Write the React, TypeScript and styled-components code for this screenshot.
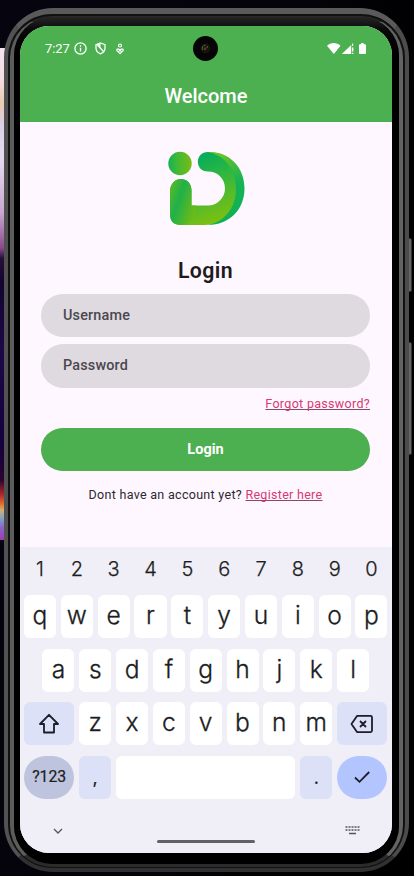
import React from "react";
import styled, { createGlobalStyle } from "styled-components";

const GlobalStyle = createGlobalStyle`
  * { box-sizing: border-box; }
  body { margin: 0; background: #03020a; font-family: Roboto, "Liberation Sans", sans-serif; }
`;

const Stage = styled.div`
  position: relative;
  width: 414px;
  height: 876px;
  overflow: hidden;
  padding: 8px 0 0 4px;
  background: linear-gradient(100deg, #06040f 0%, #04030a 50%, #000 80%);
`;

const Wallpaper = styled.div`
  position: absolute;
  left: 0;
  top: 48px;
  width: 10px;
  height: 492px;
  background: linear-gradient(
    #f3e4ef 0, #f5dfe4 30px, #eccbb0 55px, #dcd0e6 75px, #e6dcf2 110px, #c9a6cf 165px,
    #8a4a8e 200px, #26103a 210px, #12042e 235px, #1c0748 300px, #14003c 400px, #2a0330 432px,
    #b02a2c 447px, #e07030 456px, #d8b070 462px, #82a4c8 470px, #8a62c8 480px, #a03ab0 492px
  );
`;

const SideButton = styled.div<{ $top: number; $height: number }>`
  position: absolute;
  left: 408px;
  top: ${(p) => p.$top}px;
  width: 4px;
  height: ${(p) => p.$height}px;
  border-radius: 0 2px 2px 0;
  border: 1px solid #333;
  background: #666;
`;

const Shell = styled.div`
  position: relative;
  width: 405px;
  height: 864px;
  border-radius: 49px;
  border: solid;
  border-width: 6px 4px 4px 4px;
  border-color: #5a5a5a #4c4c4c #303030 #525252;
  background: #3c3c3c;
`;

const Groove = styled.div`
  height: 100%;
  border-radius: 44px;
  border: solid #111;
  border-width: 2px 2px 1px 2px;
  background: #111;
`;

const Rim = styled.div`
  height: 100%;
  border-radius: 42px;
  border: solid;
  border-width: 1px 4px 3px 4px;
  border-color: #292929 #636363 #2b2b2b #5c5c5c;
  background: #1c1c1c;
`;

const Bezel = styled.div`
  height: 100%;
  padding: 9px 7px 11px 6px;
  border-radius: 38px;
  background: linear-gradient(#252525, #0a0a0a 12px, #000 30px, #000);
`;

const Screen = styled.div`
  display: flex;
  flex-direction: column;
  width: 372px;
  height: 827px;
  overflow: hidden;
  border-radius: 29px;
  background: #fef7ff;
`;

const Header = styled.header`
  height: 96px;
  background: #4caf50;
  color: #fff;
`;

const StatusBar = styled.div`
  display: grid;
  grid-template-columns: 1fr 26px 1fr;
  align-items: center;
  height: 45px;
  padding: 0 25px;
`;

const StatusGroup = styled.div<{ $end?: boolean }>`
  display: flex;
  align-items: center;
  justify-content: ${(p) => (p.$end ? "flex-end" : "flex-start")};
  svg { display: block; }
`;

const Spacer = styled.span<{ $w: number }>`
  width: ${(p) => p.$w}px;
`;

const Clock = styled.span`
  width: 29px;
  font-size: 13px;
  letter-spacing: -0.1px;
  line-height: 16px;
`;

const Camera = styled.div`
  display: grid;
  place-items: center;
  width: 25px;
  height: 25px;
  border-radius: 50%;
  background: #050505;
`;

const AppTitle = styled.h1`
  margin: 13px 0 0;
  text-align: center;
  font-size: 20px;
  line-height: 24px;
  font-weight: 500;
`;

const Form = styled.main`
  display: flex;
  flex-direction: column;
  height: 425px;
  padding: 29px 22px 0 21px;
`;

const LogoRow = styled.div`
  display: flex;
  height: 76px;
  padding-left: 127px;
`;

const Heading = styled.h2`
  margin: 32px 0 10.5px;
  text-align: center;
  font-size: 21.3px;
  line-height: 24px;
  font-weight: 600;
  letter-spacing: 0.4px;
  color: #1d1b20;
`;

const Field = styled.div`
  height: 43.3px;
  margin-bottom: 7.5px;
  padding-left: 22px;
  border-radius: 22px;
  background: #dedae0;
  color: #4b474f;
  font-size: 14.4px;
  font-weight: 500;
  line-height: 44px;
  letter-spacing: 0.18px;
`;

const Link = styled.a`
  color: #d63a72;
  text-decoration: underline;
  text-decoration-color: #8b4967;
  text-decoration-thickness: 1px;
  text-underline-offset: 1px;
  text-decoration-skip-ink: none;
`;

const ForgotRow = styled.div`
  margin-top: 1px;
  text-align: right;
  font-size: 12.5px;
  line-height: 16px;
  letter-spacing: 0.31px;
`;

const Submit = styled.button`
  flex: none;
  width: 329px;
  height: 43px;
  margin: 15.8px 0 0;
  padding: 1px 0 0;
  border: 0;
  border-radius: 22px;
  background: #4caf50;
  color: #fff;
  font-family: inherit;
  font-size: 14.5px;
  font-weight: 700;
`;

const Register = styled.p`
  margin: 16px 0 0;
  text-align: center;
  font-size: 12.5px;
  line-height: 16px;
  letter-spacing: 0.3px;
  color: #2b2830;
`;

const Keyboard = styled.section`
  flex: 1;
  background: #f0eff7;
  color: #1c1d22;
  font-family: Inter, Roboto, sans-serif;
  padding: 0 4.6px 0 4px;
`;

const KeyRow = styled.div<{ $inset?: number }>`
  display: flex;
  gap: 4.8px;
  height: 43px;
  margin-bottom: 10.4px;
  padding: 0 ${(p) => p.$inset || 0}px;
`;

const NumberRow = styled(KeyRow)`
  height: 46px;
  margin-bottom: 2.4px;
`;

const Digit = styled.div`
  flex: 1;
  text-align: center;
  font-size: 20px;
  font-weight: 300;
  line-height: 44px;
  -webkit-text-stroke: 0.25px #1c1d22;
`;

type Tone = "plain" | "tint" | "mode" | "enter";
const tones: Record<Tone, string> = {
  plain: "#fff",
  tint: "#dde1f7",
  mode: "#bec4dd",
  enter: "#b3c5ff",
};
const fontSizes: Record<Tone, number> = { plain: 24.6, tint: 18, mode: 15.8, enter: 20 };

const Key = styled.div<{ $tone?: Tone; $width?: number }>`
  display: flex;
  align-items: center;
  justify-content: center;
  flex: ${(p) => (p.$width ? `0 0 ${p.$width}px` : "1")};
  border-radius: ${(p) => (p.$tone === "mode" || p.$tone === "enter" ? "22px" : "6px")};
  background: ${(p) => tones[p.$tone || "plain"]};
  font-family: ${(p) => (p.$tone === "mode" ? "Roboto, sans-serif" : "inherit")};
  font-size: ${(p) => fontSizes[p.$tone || "plain"]}px;
  font-weight: ${(p) => (p.$tone ? 400 : 300)};
  -webkit-text-stroke: ${(p) => (p.$tone ? "0.2px" : "0.3px")} #1c1d22;
  line-height: 40px;
  padding-top: ${(p) => (p.$tone === "tint" ? 1 : 0)}px;
  padding-bottom: ${(p) => (p.$tone ? 0 : 3)}px;
`;

const NavBar = styled.div`
  display: grid;
  grid-template-columns: 1fr 98px 1fr;
  height: 44px;
  padding: 0 27px 0 29px;
  align-items: center;
  svg { display: block; }
  > :last-child { justify-self: end; }
`;

const HomePill = styled.div`
  height: 3px;
  margin: 22px 1px 0 -1px;
  border-radius: 2px;
  background: #626168;
`;

const InfoIcon = () => (
  <svg width="13" height="13" viewBox="0 0 13 13" fill="none" stroke="#fff" strokeWidth="1.3">
    <circle cx="6.5" cy="6.5" r="5.6" />
    <path d="M6.5 5.8v3.7M6.5 3.3v1.4" />
  </svg>
);

const ShieldIcon = () => (
  <svg width="11" height="13" viewBox="0 0 11 13" fill="none" stroke="#fff" strokeWidth="1.3">
    <path d="M5.5 1 10 2.6v3.5c0 2.7-1.8 4.8-4.5 5.8C2.8 10.9 1 8.8 1 6.1V2.6z" />
    <path d="M2 2.5 8.5 9.5" />
    <path d="M2.5 2.2 5.5 1.2v4.6z" fill="#fff" stroke="none" />
  </svg>
);

const CareIcon = () => (
  <svg width="8" height="12" viewBox="0 0 8 12" fill="none" stroke="#fff" strokeWidth="1.2">
    <circle cx="4" cy="2.5" r="1.5" />
    <path d="M4 10.6 1.2 7.8C.1 6.6 1.600 5.200 2.900 6.200L4 7.200l1.100-1c1.300-1 2.800.4 1.700 1.600zM2.500 8h3" />
  </svg>
);

const SignalIcons = () => (
  <svg width="40" height="14" viewBox="0 0 40 14" fill="#fff">
    <path d="M0 3.8C3.8.2 9.7.2 13.5 3.8L6.8 12z" />
    <path d="M24.2 3v9h-9.4zM25 1.5h1.2V4H25zM25 5.5h1.4v4H25zM25 10.7h1.4V12H25z" />
    <path d="M34.2 1h2.5v1.200H38q1 0 1 1V11q0 1-1 1h-5q-1 0-1-1V3.200q0-1 1-1h1.200z" />
  </svg>
);

const LensIcon = () => (
  <svg width="13" height="13" viewBox="0 0 13 13" fill="none">
    <circle cx="6.5" cy="6.5" r="5" fill="#16130f" />
    <path d="M3.5 8a3.5 3.5 0 0 1 3-5" stroke="#68594c" />
    <circle cx="6" cy="6.8" r="1.5" fill="#642d25" />
    <circle cx="8.3" cy="5" r=".8" fill="#67734b" />
  </svg>
);

const Logo = () => (
  <svg width="78" height="76" viewBox="0 0 78 76">
    <defs>
      <linearGradient id="dot" x1="0" x2="1">
        <stop offset="0" stopColor="#12b255" />
        <stop offset=".35" stopColor="#3eb83a" />
        <stop offset="1" stopColor="#78bd12" />
      </linearGradient>
      <linearGradient id="stem" x1="0" y1="0" x2="1" y2=".6">
        <stop offset="0" stopColor="#63bb1c" />
        <stop offset=".45" stopColor="#20b14a" />
        <stop offset="1" stopColor="#6cba16" />
      </linearGradient>
      <linearGradient id="bowl" gradientUnits="userSpaceOnUse" x1="34" y1="4" x2="60" y2="70">
        <stop offset="0" stopColor="#05ad5c" />
        <stop offset=".4" stopColor="#35b83c" />
        <stop offset="1" stopColor="#83c00d" />
      </linearGradient>
      <linearGradient id="edge" gradientUnits="userSpaceOnUse" x1="45" y1="0" x2="66" y2="70">
        <stop offset="0" stopColor="#77c51e" />
        <stop offset=".5" stopColor="#16b355" />
        <stop offset="1" stopColor="#0fb055" />
      </linearGradient>
    </defs>
    <path
      d="M40 1C61 1 71 15 71 36S59 74 36 74H13Q2 74 2 63V41C2 24 23 24 23.5 39V54.5H40c9 0 17-7.5 17-17S50 20.5 40 20.5C26.5 20.5 26.5 1 40 1z"
      fill="url(#bowl)"
    />
    <path d="M40 1C61 0 76.5 16 76.5 37.5S61 74 40 74c16-3 28-17 28-36S57 4 40 1z" fill="url(#edge)" />
    <path d="M23.5 54.5V39C23 24 2 24 2 41v22Q2 74 13 74c8 0 14-5 15-19.5z" fill="url(#stem)" />
    <circle cx="12" cy="12.5" r="11.7" fill="url(#dot)" />
  </svg>
);

const ShiftIcon = () => (
  <svg width="22" height="22" viewBox="0 0 22 22" fill="none" stroke="#1c1d28" strokeWidth="1.8" strokeLinejoin="round">
    <path d="M11 1.8 20 11h-4v8.5H6V11H2z" />
  </svg>
);

const BackspaceIcon = () => (
  <svg width="24" height="20" viewBox="0 0 24 20" fill="none" stroke="#1c1d28" strokeWidth="1.8" strokeLinejoin="round">
    <path d="M7 1.9h13.5Q22 1.9 22 3.4v13.2q0 1.5-1.5 1.5H7L1.5 10zM10 7l6 6M16 7l-6 6" />
  </svg>
);

const CheckIcon = () => (
  <svg width="18" height="14" viewBox="0 0 18 14" fill="none" stroke="#1c1d28" strokeWidth="1.8">
    <path d="m2 7.5 4.5 4.3L16.2 2" />
  </svg>
);

const ChevronIcon = () => (
  <svg width="10" height="6" viewBox="0 0 10 6" fill="none" stroke="#55555c" strokeWidth="1.3">
    <path d="m1 1 4 4 4-4" />
  </svg>
);

const KeyboardIcon = () => (
  <svg width="15" height="9" viewBox="0 0 15 9" fill="none" stroke="#55555c">
    <path d="M.5 1h14M.5 4h14" strokeWidth="1.5" strokeDasharray="2 1" />
    <path d="M4 7.5h7" strokeWidth="1.5" />
  </svg>
);

const letters = (text: string) => text.split("").map((c) => <Key key={c}>{c}</Key>);

export default function App() {
  return (
    <>
      <GlobalStyle />
      <Stage>
        <Wallpaper />
        <SideButton $top={238} $height={54} />
        <SideButton $top={342} $height={113} />
        <Shell>
          <Groove>
            <Rim>
              <Bezel>
                <Screen>
                  <Header>
                    <StatusBar>
                      <StatusGroup>
                        <Clock>7:27</Clock>
                        <InfoIcon />
                        <Spacer $w={8} />
                        <ShieldIcon />
                        <Spacer $w={10} />
                        <CareIcon />
                      </StatusGroup>
                      <Camera><LensIcon /></Camera>
                      <StatusGroup $end><SignalIcons /></StatusGroup>
                    </StatusBar>
                    <AppTitle>Welcome</AppTitle>
                  </Header>
                  <Form>
                    <LogoRow><Logo /></LogoRow>
                    <Heading>Login</Heading>
                    <Field>Username</Field>
                    <Field>Password</Field>
                    <ForgotRow><Link>Forgot password?</Link></ForgotRow>
                    <Submit>Login</Submit>
                    <Register>Dont have an account yet? <Link>Register here</Link></Register>
                  </Form>
                  <Keyboard>
                    <NumberRow>
                      {"1234567890".split("").map((d) => <Digit key={d}>{d}</Digit>)}
                    </NumberRow>
                    <KeyRow>{letters("qwertyuiop")}</KeyRow>
                    <KeyRow $inset={18.4}>{letters("asdfghjkl")}</KeyRow>
                    <KeyRow>
                      <Key $tone="tint" $width={50.4}><ShiftIcon /></Key>
                      {letters("zxcvbnm")}
                      <Key $tone="tint" $width={50.4}><BackspaceIcon /></Key>
                    </KeyRow>
                    <KeyRow>
                      <Key $tone="mode" $width={50.4}>?123</Key>
                      <Key $tone="tint" $width={32}>,</Key>
                      <Key />
                      <Key $tone="tint" $width={32}>.</Key>
                      <Key $tone="enter" $width={50.4}><CheckIcon /></Key>
                    </KeyRow>
                    <NavBar>
                      <ChevronIcon />
                      <HomePill />
                      <KeyboardIcon />
                    </NavBar>
                  </Keyboard>
                </Screen>
              </Bezel>
            </Rim>
          </Groove>
        </Shell>
      </Stage>
    </>
  );
}
